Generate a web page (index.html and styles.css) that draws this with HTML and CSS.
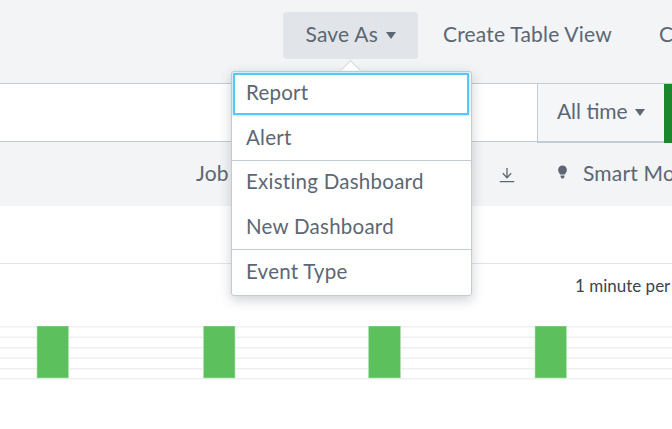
FILE: index.html
```html
<!DOCTYPE html>
<html lang="en">
<head>
<meta charset="utf-8">
<title>Search</title>
<link rel="stylesheet" href="styles.css">
</head>
<body>
<div class="page">
  <header class="topbar">
    <button class="action action-active">Save As <span class="caret"></span></button>
    <button class="action">Create Table View</button>
    <button class="action">Close</button>
  </header>
  <section class="searchrow">
    <div class="searchinput"></div>
    <button class="timepicker">All time <span class="caret"></span></button>
    <div class="searchgo"></div>
  </section>
  <section class="jobrow">
    <span class="job">Job</span>
    <svg class="download" width="16" height="16" viewBox="0 0 16 16"><path d="M8 1V10.5M3.8 6.3 8 10.7 12.2 6.3M.8 14.7H15.2" fill="none" stroke="#5c6773" stroke-width="1.3"/></svg>
    <span class="mode">
      <svg class="bulb" width="11" height="16" viewBox="0 0 11 16"><path d="M5.5 1.5a4.4 4.4 0 0 1 4.4 4.4c0 1.9-1.4 3-2 4.6H3.1c-.6-1.6-2-2.7-2-4.6A4.4 4.4 0 0 1 5.5 1.5ZM3.6 11.5h3.8v1.6L6.4 14.5H4.6L3.6 13.1Z" fill="#5c6773"/></svg>
      Smart Mode
    </span>
  </section>
  <section class="summary">
    <div class="summary-top"></div>
    <div class="scale">1 minute per column</div>
    <svg class="chart" width="672" height="56" viewBox="0 0 672 56">
      <g class="gridlines">
        <rect y="0" width="672" height="1.5"/>
        <rect y="10.5" width="672" height="1.5"/>
        <rect y="21" width="672" height="1.5"/>
        <rect y="31.5" width="672" height="1.5"/>
        <rect y="42" width="672" height="1.5"/>
        <rect y="52" width="672" height="1.5"/>
      </g>
      <g class="bars">
        <rect x="37" y="0" width="31.5" height="52"/>
        <rect x="203.5" y="0" width="31.5" height="52"/>
        <rect x="368.5" y="0" width="32" height="52"/>
        <rect x="535" y="0" width="31.5" height="52"/>
      </g>
    </svg>
  </section>
  <nav class="menu">
    <span class="menu-arrow"></span>
    <a class="item item-focus">Report</a>
    <a class="item item-alert">Alert</a>
    <a class="item item-rule item-existing">Existing Dashboard</a>
    <a class="item item-new">New Dashboard</a>
    <a class="item item-rule item-event">Event Type</a>
  </nav>
</div>
</body>
</html>
```
FILE: styles.css
```css
* { box-sizing: border-box; }
html, body { margin: 0; padding: 0; background: #fff; }
body { font-family: Lato, "Open Sans", sans-serif; color: #5c6773; }
.page { position: relative; width: 672px; height: 429px; overflow: hidden; }

.topbar {
  height: 84px;
  background: #f2f4f5;
  border-bottom: 1px solid #c3cbd4;
  display: flex;
  align-items: flex-start;
  padding: 12px 0 0 283px;
  white-space: nowrap;
}
.action {
  flex: none;
  height: 47px;
  padding: 0 22px 4px 22px;
  margin: 0 3px 0 0;
  font: 21px Lato, sans-serif;
  letter-spacing: .2px;
  color: #5c6773;
  background: none;
  border: 0;
  border-radius: 4px;
}
.action-active { width: 135px; background: #e1e5e9; padding: 0 0 4px; }
.caret {
  display: inline-block;
  width: 0;
  height: 0;
  margin-left: 2px;
  vertical-align: 3px;
  border-left: 5.5px solid transparent;
  border-right: 5.5px solid transparent;
  border-top: 7px solid #5c6773;
}

.searchrow { height: 58px; display: flex; background: #fff; border-bottom: 1px solid #c3cbd4; }
.searchinput { width: 537px; flex: none; }
.timepicker {
  flex: none;
  width: 127px;
  height: 59px;
  font: 21px Lato, sans-serif;
  color: #5c6773;
  background: #f5f6f8;
  border: 0;
  border-left: 1px solid #c3cbd4;
  border-bottom: 2px solid #c3cbd4;
  padding: 0 0 5px;
}
.searchgo { flex: none; width: 8px; height: 59px; background: #1a872d; }

.jobrow {
  height: 64px;
  background: #f2f4f5;
  display: flex;
  align-items: center;
  padding: 0 0 4px 196px;
  font-size: 21px;
  letter-spacing: .2px;
  white-space: nowrap;
}
.job { width: 303px; flex: none; }
.download { flex: none; margin-top: 5px; }
.mode { display: inline-flex; align-items: center; gap: 15px; margin-left: 42px; }
.bulb { flex: none; }

.summary { position: relative; }
.summary-top { height: 58px; border-bottom: 1px solid #e1e4e8; }
.scale { height: 62px; padding: 11px 0 0 575px; font-size: 17px; color: #3c444d; white-space: nowrap; overflow: hidden; }
.chart { display: block; }
.gridlines rect { fill: #eeeff1; }
.bars rect { fill: #5cc05c; stroke: #b5e3b5; stroke-width: 0.6; }

.menu {
  position: absolute;
  left: 231px;
  top: 71px;
  width: 241px;
  height: 225px;
  background: #fff;
  border: 1px solid #c3cbd4;
  border-radius: 3px;
  box-shadow: 0 4px 12px rgba(60, 68, 77, .25);
  padding-top: 1px;
}
.menu-arrow {
  position: absolute;
  left: 111px;
  top: -9px;
  width: 15px;
  height: 15px;
  background: #fff;
  border-left: 1px solid #c3cbd4;
  border-top: 1px solid #c3cbd4;
  transform: rotate(45deg);
  clip-path: polygon(0 0, 100% 0, 0 100%);
}
.item {
  display: flex;
  align-items: center;
  height: 45px;
  padding-left: 14px;
  font-size: 20.5px;
  letter-spacing: .25px;
  color: #5c6773;
}
.item-focus {
  height: 42px;
  margin: 0 2px 0 1px;
  padding: 0 0 4px 11px;
  border: 2px solid #5cc5f7;
  box-shadow: 0 0 3px #7fd2fa;
}
.item-alert { height: 45px; padding-bottom: 1px; }
.item-rule { border-top: 1px solid #c3cbd4; }
.item-existing { padding-bottom: 4px; }
.item-new { height: 44px; padding-bottom: 2px; }
.item-event { height: 45px; padding-bottom: 3px; }
```
